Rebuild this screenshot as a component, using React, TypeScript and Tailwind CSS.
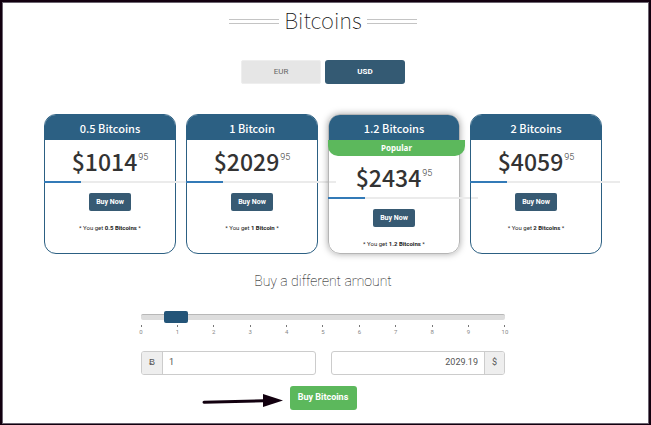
import { useState } from "react";

type Plan = {
  title: string;
  dollars: string;
  cents: string;
  amount: string;
  popular?: boolean;
};

const plans: Plan[] = [
  { title: "0.5 Bitcoins", dollars: "1014", cents: "95", amount: "0.5 Bitcoins" },
  { title: "1 Bitcoin", dollars: "2029", cents: "95", amount: "1 Bitcoin" },
  { title: "1.2 Bitcoins", dollars: "2434", cents: "95", amount: "1.2 Bitcoins", popular: true },
  { title: "2 Bitcoins", dollars: "4059", cents: "95", amount: "2 Bitcoins" },
];

const ticks = [0, 1, 2, 3, 4, 5, 6, 7, 8, 9, 10];
const RATE = 2029.19;

function TitleRule() {
  return <span className="mt-1 h-[5px] w-[50px] border-y border-[#c4c4c4]" />;
}

function PlanCard({ plan }: { plan: Plan }) {
  return (
    <article
      className={
        plan.popular
          ? "h-[140px] min-w-0 flex-1 rounded-xl border border-[#b5b5b5] shadow-[0_0_7px_rgba(0,0,0,0.35)]"
          : "h-[140px] min-w-0 flex-1 rounded-xl border border-[#2c6083]"
      }
    >
      <h2 className="h-[25px] rounded-t-[11px] bg-[#2c6083] text-center font-['Noto_Sans_CJK_JP',sans-serif] text-[11px] leading-[26px] font-medium text-white">
        {plan.title}
      </h2>
      {plan.popular && (
        <p className="-mr-[6px] -ml-px h-4 rounded-b-[10px] bg-[#5cb85c] text-center font-['Noto_Sans',sans-serif] text-[8px] leading-4 font-bold text-white">
          Popular
        </p>
      )}
      <p className="flex h-[41px] items-start justify-center pt-[5px] text-[#333]">
        <span className="font-['Noto_Sans_CJK_JP',sans-serif] text-[23px] leading-8 font-medium">
          ${plan.dollars}
        </span>
        <sup className="top-0 pt-1.5 pl-px text-[9px] leading-3 font-light">{plan.cents}</sup>
      </p>
      <div className="-ml-px h-0.5 w-[150px] bg-[#ebebeb]">
        <div className="h-0.5 w-[37px] bg-[#337ab7]" />
      </div>
      <div className="flex flex-col items-center pt-2.5">
        <button
          type="button"
          className="h-[18px] w-[42px] rounded-xs bg-[#375a73] text-[7px] leading-none font-bold text-white"
        >
          Buy Now
        </button>
        <p className="pt-[11px] text-[6px] leading-3 text-[#222]">
          * You get <b>{plan.amount}</b> *
        </p>
      </div>
    </article>
  );
}

export default function App() {
  const [currency, setCurrency] = useState("USD");
  const [coins, setCoins] = useState(1);

  return (
    <main className="min-h-screen border-2 border-b border-[#12000f] bg-white font-[Roboto,sans-serif]">
      <div className="flex min-h-[422px] flex-col items-center border border-[#6b6470] pr-[5px]">
        <h1 className="flex items-center gap-[5px] font-['Noto_Sans_CJK_JP',sans-serif] text-[22px] leading-8 font-thin text-[#111]">
          <TitleRule />
          Bitcoins
          <TitleRule />
        </h1>

        <div className="mt-[25px] flex gap-1">
          <button
            type="button"
            onClick={() => setCurrency("EUR")}
            aria-pressed={currency === "EUR"}
            className="h-6 w-20 rounded-xs border border-[#eeeeee] bg-[#e6e6e6] text-[8px] text-[#666]"
          >
            EUR
          </button>
          <button
            type="button"
            onClick={() => setCurrency("USD")}
            aria-pressed={currency === "USD"}
            className="h-6 w-20 rounded-[3px] bg-[#345a73] text-[8px] font-bold text-white"
          >
            USD
          </button>
        </div>

        <section className="mt-[30px] flex w-full max-w-[558px] gap-2.5">
          {plans.map((plan) => (
            <PlanCard key={plan.title} plan={plan} />
          ))}
        </section>

        <label htmlFor="amount" className="mt-[17px] text-[14px] leading-5 font-thin text-black">
          Buy a different amount
        </label>

        <div className="mt-5 w-full max-w-[364px]">
          <div className="grid h-3 items-center">
            <div className="col-start-1 row-start-1 h-1.5 rounded-xs border-t border-[#b8b8b8] bg-[#dddddd]" />
            <input
              id="amount"
              type="range"
              min={0}
              max={10}
              step={0.1}
              value={coins}
              onChange={(e) => setCoins(Number(e.target.value))}
              className="col-start-1 row-start-1 -mx-3.5 h-3 appearance-none bg-transparent [&::-webkit-slider-thumb]:h-3 [&::-webkit-slider-thumb]:w-6 [&::-webkit-slider-thumb]:appearance-none [&::-webkit-slider-thumb]:rounded-xs [&::-webkit-slider-thumb]:bg-[#235478]"
            />
          </div>
          <div className="-mx-[18px] mt-0.5 flex justify-between">
            {ticks.map((t) => (
              <div key={t} className="flex w-9 flex-col items-center text-[6px] leading-2 text-[#888]">
                <span className="h-0.5 w-px bg-[#777]" />
                <span className="pt-px">{t}</span>
              </div>
            ))}
          </div>

          <div className="mt-[15px] flex gap-[15px] text-[9px] text-[#555]">
            <div className="flex h-6 min-w-0 flex-1 overflow-hidden rounded-[3px] border border-[#ccc]">
              <label htmlFor="btc" className="flex w-[21px] items-center justify-center border-r border-[#ccc] bg-[#eee]">
                Ƀ
              </label>
              <input
                id="btc"
                type="text"
                value={String(coins)}
                onChange={(e) => setCoins(Number(e.target.value) || 0)}
                className="min-w-0 flex-1 px-1.5 text-[9px]"
              />
            </div>
            <div className="flex h-6 min-w-0 flex-1 overflow-hidden rounded-[3px] border border-[#ccc]">
              <input
                id="fiat"
                type="text"
                readOnly
                value={(coins * RATE).toFixed(2)}
                className="min-w-0 flex-1 px-1.5 text-right text-[9px]"
              />
              <label htmlFor="fiat" className="flex w-5 items-center justify-center border-l border-[#ccc] bg-[#eee]">
                $
              </label>
            </div>
          </div>
        </div>

        <div className="relative mt-[11px]">
          <svg viewBox="0 0 82 16" className="absolute top-2 -left-[88px] h-4 w-[82px]" aria-hidden="true">
            <path d="M2 8.3 62 6.8" stroke="#12000f" strokeWidth="3" strokeLinecap="round" />
            <path d="M61 0 81 6.5 61 13Z" fill="#12000f" />
          </svg>
          <button type="button" className="block h-6 w-[67px] rounded-[3px] bg-[#5cb85c] text-[9px] font-bold text-white">
            Buy Bitcoins
          </button>
        </div>
      </div>
    </main>
  );
}
